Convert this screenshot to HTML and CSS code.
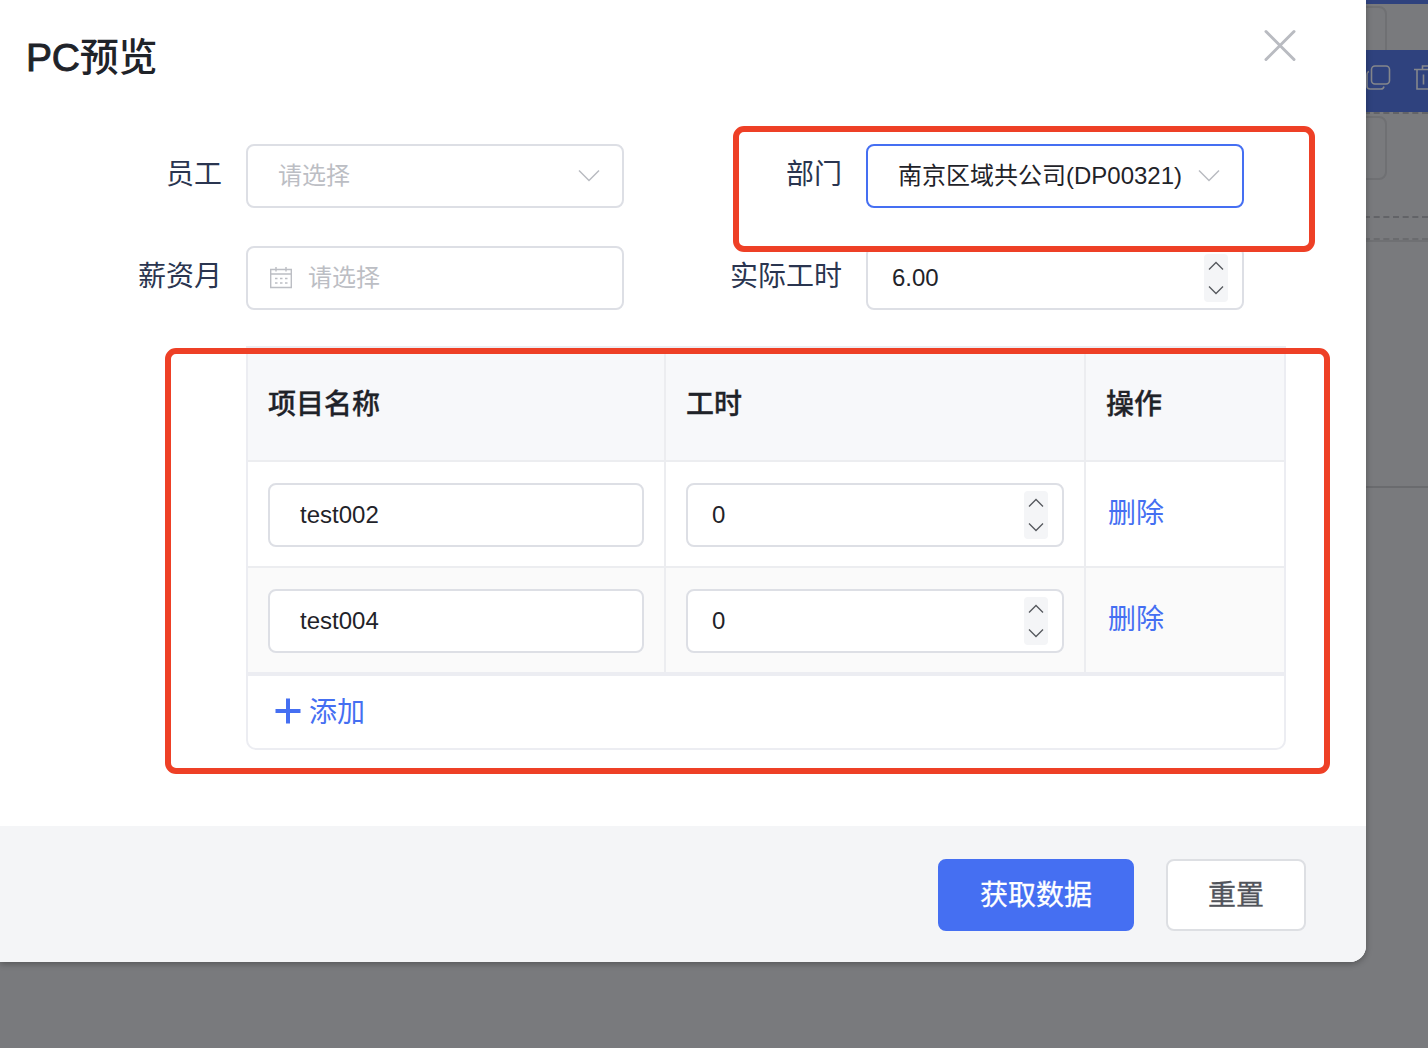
FILE: index.html
```html
<!DOCTYPE html>
<html lang="zh-CN">
<head>
  <meta charset="UTF-8" />
  <meta name="viewport" content="width=device-width, initial-scale=1" />
  <title>PC预览</title>
  <link rel="stylesheet" href="styles.css">
</head>
<body>
  <!-- form designer behind the dialog -->
  <div class="designer">
    <div class="designer-top"><div class="ghost-field"></div></div>
    <div class="designer-toolbar">
      <svg class="tool-icon" width="26" height="26" viewBox="0 0 26 26">
        <rect x="5.500" y="1" width="18" height="18" rx="3.5"/>
        <path d="M3 6.500Q1 7 1 10v11q0 3 3 3h11q2.500 0 3-2.500"/>
      </svg>
      <svg class="tool-icon" width="26" height="26" viewBox="0 0 26 26">
        <path d="M0 4.500h26M8.500 4.500V1h9v3.500M3 4.500V24h20V4.500M9.500 9.500v10M15.500 9.500v10"/>
      </svg>
    </div>
    <div class="designer-row"><div class="ghost-field"></div></div>
    <div class="designer-gap"></div>
    <div class="designer-area"></div>
  </div>

  <div class="dialog">
    <div class="dialog-header">
      <div class="dialog-title"><span class="latin">PC</span>预览</div>
      <svg class="dialog-close" width="34" height="34" viewBox="0 0 34 34"><path d="M3 3.500l28 28M31 3.500l-28 28"/></svg>
    </div>

    <div class="dialog-body">
      <div class="form">
        <div class="label">员工</div>
        <div class="field select">
          <span class="placeholder">请选择</span>
          <svg class="arrow" width="22" height="14" viewBox="0 0 22 14"><path d="M1 1.500l10 10 10-10"/></svg>
        </div>
        <div class="label">部门</div>
        <div class="field select active">
          <span>南京区域共公司(DP00321)</span>
          <svg class="arrow" width="22" height="14" viewBox="0 0 22 14"><path d="M1 1.500l10 10 10-10"/></svg>
        </div>
        <div class="label">薪资月</div>
        <div class="field date">
          <svg class="calendar" width="22" height="22" viewBox="0 0 22 22">
            <path d="M.7 2.500h20.600v18H.7zM.7 7h20.600M6 0v4.500M16 0v4.500"/>
            <path d="M5 11.500h2.500M10 11.500h2.500M15 11.500h2.500M5 16h2.500M10 16h2.500M15 16h2.500"/>
          </svg>
          <span class="placeholder">请选择</span>
        </div>
        <div class="label">实际工时</div>
        <div class="field number">
          <span>6.00</span>
          <div class="stepper">
            <svg width="16" height="10" viewBox="0 0 16 10"><path d="M1 8.500l7-7 7 7"/></svg>
            <svg width="16" height="10" viewBox="0 0 16 10"><path d="M1 1.500l7 7 7-7"/></svg>
          </div>
        </div>
      </div>

      <div class="sub-table">
        <div class="row head">
          <div class="cell">项目名称</div>
          <div class="cell">工时</div>
          <div class="cell">操作</div>
        </div>
        <div class="row">
          <div class="cell"><div class="field text">test002</div></div>
          <div class="cell">
            <div class="field number">
              <span>0</span>
              <div class="stepper">
                <svg width="16" height="10" viewBox="0 0 16 10"><path d="M1 8.500l7-7 7 7"/></svg>
                <svg width="16" height="10" viewBox="0 0 16 10"><path d="M1 1.500l7 7 7-7"/></svg>
              </div>
            </div>
          </div>
          <div class="cell"><a class="link">删除</a></div>
        </div>
        <div class="row striped">
          <div class="cell"><div class="field text">test004</div></div>
          <div class="cell">
            <div class="field number">
              <span>0</span>
              <div class="stepper">
                <svg width="16" height="10" viewBox="0 0 16 10"><path d="M1 8.500l7-7 7 7"/></svg>
                <svg width="16" height="10" viewBox="0 0 16 10"><path d="M1 1.500l7 7 7-7"/></svg>
              </div>
            </div>
          </div>
          <div class="cell"><a class="link">删除</a></div>
        </div>
        <div class="table-add">
          <svg width="26" height="26" viewBox="0 0 26 26"><path d="M13 .5v25M.5 13h25"/></svg>
          <a class="link">添加</a>
        </div>
      </div>
    </div>

    <div class="dialog-footer">
      <button class="btn primary">获取数据</button>
      <button class="btn">重置</button>
    </div>
  </div>

  <div class="mark mark-dept"></div>
  <div class="mark mark-table"></div>
</body>
</html>
```

FILE: styles.css
```css
* {
  box-sizing: border-box;
}
html, body {
  margin: 0;
  padding: 0;
}
body {
  position: relative;
  width: 1428px;
  height: 1048px;
  overflow: hidden;
  background: #797a7d;
  font-family: "Liberation Sans", "Noto Sans CJK SC", sans-serif;
  font-size: 24px;
  color: #1f2329;
}
svg {
  display: block;
  flex: none;
  fill: none;
  stroke: currentColor;
}

/* designer */
.designer {
  padding-left: 1306px;
}
.designer-top {
  height: 50px;
  padding-top: 2px;
  border-top: 4px solid #2f427e;
  overflow: hidden;
}
.ghost-field {
  width: 81px;
  height: 64px;
  border: 2px solid #6f7073;
  border-radius: 8px;
}
.designer-toolbar {
  display: flex;
  gap: 22px;
  height: 62px;
  padding: 15px 0 0 60px;
  background: #2f427e;
  color: #85878c;
}
.tool-icon {
  stroke-width: 1.6;
}
.designer-row {
  height: 106px;
  padding-top: 2px;
  border-top: 2px dashed #626367;
  border-bottom: 2px dashed #626367;
}
.designer-gap {
  height: 22px;
  border-bottom: 2px dashed #6a6b6e;
}
.designer-area {
  height: 248px;
  border-top: 2px solid #6f7073;
  border-bottom: 2px solid #6a6b6e;
}

/* dialog */
.dialog {
  position: absolute;
  top: 0;
  left: 0;
  display: flex;
  flex-direction: column;
  width: 1366px;
  height: 962px;
  background: #fff;
  border-radius: 0 0 16px 0;
  box-shadow: 0 2px 6px rgba(0, 0, 0, 0.3);
  overflow: hidden;
}
.dialog-header {
  display: flex;
  justify-content: space-between;
  height: 144px;
  padding: 28px 69px 0 26px;
}
.dialog-title {
  padding-top: 1px;
  font-size: 39px;
  font-weight: 500;
  line-height: 58px;
  letter-spacing: -0.2px;
}
.latin {
  -webkit-text-stroke: 0.9px currentColor;
}
.dialog-close {
  color: #b9bbc1;
  stroke-width: 3;
  stroke-linecap: round;
}
.dialog-body {
  flex: 1;
}
.form {
  display: grid;
  grid-template-columns: 222px 378px 194px 378px;
  column-gap: 24px;
  row-gap: 38px;
}
.label {
  font-size: 28px;
  line-height: 61px;
  text-align: right;
  color: #2a3550;
}
.field {
  display: flex;
  align-items: center;
  height: 64px;
  border: 2px solid #dddfe5;
  border-radius: 8px;
  background: #fff;
  line-height: 60px;
  white-space: nowrap;
}
.field.active {
  border-color: #456ff2;
}
.select {
  justify-content: space-between;
  padding: 0 22px 0 30px;
}
.date {
  gap: 16px;
  padding-left: 22px;
}
.text {
  padding-left: 30px;
}
.number {
  justify-content: space-between;
  padding: 0 14px 0 24px;
}
.placeholder {
  color: #bcbec4;
}
.arrow {
  color: #b9bbc1;
  stroke-width: 1.5;
}
.calendar {
  color: #bcbec4;
  stroke-width: 1.4;
}
.stepper {
  display: flex;
  flex-direction: column;
  justify-content: space-between;
  align-items: center;
  width: 24px;
  height: 48px;
  padding: 7px 0;
  border-radius: 4px;
  background: #f4f5f7;
  color: #55585e;
}
.stepper svg {
  stroke-width: 1.3;
}

/* sub table */
.sub-table {
  width: 1040px;
  margin: 36px 0 0 246px;
  border: 2px solid #ecedf2;
  border-radius: 0 0 10px 10px;
  overflow: hidden;
}
.row {
  display: grid;
  grid-template-columns: 418px 420px 198px;
  height: 106px;
  border-bottom: 2px solid #ecedf0;
}
.cell {
  padding: 21px 20px 0;
  border-right: 2px solid #ecedf0;
}
.cell:last-child {
  padding-left: 22px;
  border-right: 0;
}
.head {
  height: 114px;
  background: #f7f8fa;
  font-size: 28px;
  font-weight: 500;
  line-height: 72px;
  -webkit-text-stroke: 0.3px currentColor;
}
.head .cell:last-child {
  padding-left: 20px;
}
.striped {
  height: 108px;
  border-bottom: 4px solid #ecedf2;
  background: #fafafa;
}
.link {
  font-size: 28px;
  line-height: 62px;
  color: #456ff2;
}
.table-add {
  display: flex;
  align-items: center;
  gap: 8px;
  height: 72px;
  padding: 0 0 2px 27px;
  color: #456ff2;
}
.table-add svg {
  stroke-width: 4;
}
.table-add .link {
  padding-top: 3px;
}

/* footer */
.dialog-footer {
  display: flex;
  justify-content: flex-end;
  gap: 32px;
  height: 136px;
  padding: 33px 60px 0 0;
  background: #f4f5f7;
}
.btn {
  width: 140px;
  height: 72px;
  padding: 0 0 4px;
  border: 2px solid #dddfe3;
  border-radius: 8px;
  background: #fff;
  font: inherit;
  font-size: 28px;
  color: #51545b;
  -webkit-text-stroke: 0.3px currentColor;
}
.btn.primary {
  width: 196px;
  border-color: #456ff2;
  background: #456ff2;
  color: #fff;
}

/* red highlight frames */
.mark {
  position: absolute;
  border: 6px solid #ee4026;
  border-radius: 11px;
}
.mark-dept {
  top: 126px;
  left: 733px;
  width: 582px;
  height: 126px;
}
.mark-table {
  top: 348px;
  left: 165px;
  width: 1165px;
  height: 426px;
}
```
